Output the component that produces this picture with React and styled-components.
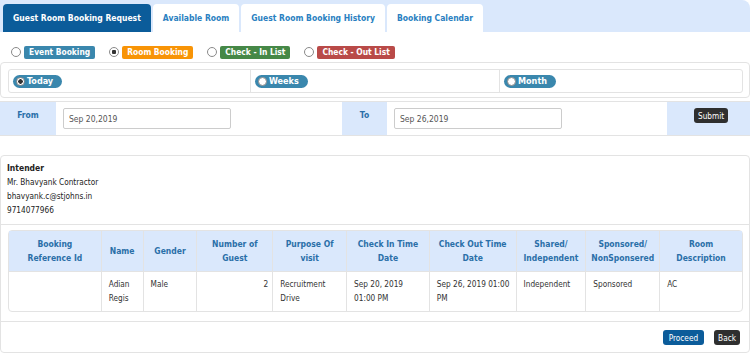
import React from 'react'
import styled, { createGlobalStyle } from 'styled-components'

const GlobalStyle = createGlobalStyle`
    body {
        margin: 0;
        background: #ffffff;
        font-family: "DejaVu Sans Condensed", "Liberation Sans", sans-serif;
        font-size: 8.2px;
        color: #333333;
    }
`

const tabs = ['Guest Room Booking Request', 'Available Room', 'Guest Room Booking History', 'Booking Calendar']

const listTypes = [
    { label: 'Event Booking', color: '#3a87ad' },
    { label: 'Room Booking', color: '#f89406', checked: true },
    { label: 'Check - In List', color: '#468847' },
    { label: 'Check - Out List', color: '#b94a48' },
]

const periods = [
    { label: 'Today', checked: true },
    { label: 'Weeks' },
    { label: 'Month' },
]

// widths are the pixel widths of the reference columns, turned into shares below
const columns = [
    { title: ['Booking', 'Reference Id'], width: 92 },
    { title: ['Name'], width: 42 },
    { title: ['Gender'], width: 54 },
    { title: ['Number of', 'Guest'], width: 76 },
    { title: ['Purpose Of', 'visit'], width: 74 },
    { title: ['Check In Time', 'Date'], width: 83 },
    { title: ['Check Out Time', 'Date'], width: 87 },
    { title: ['Shared/', 'Independent'], width: 70 },
    { title: ['Sponsored/', 'NonSponsered'], width: 74 },
    { title: ['Room', 'Description'], width: 83 },
]
const totalWidth = columns.reduce((s, c) => s + c.width, 0)

const row = [
    '',
    ['Adian', 'Regis'],
    'Male',
    '2',
    ['Recruitment', 'Drive'],
    ['Sep 20, 2019', '01:00 PM'],
    ['Sep 26, 2019 01:00', 'PM'],
    'Independent',
    'Sponsored',
    'AC',
]

const Lines = ({ value }) =>
    Array.isArray(value) ? value.map((l, i) => <div key={i}>{l}</div>) : value

export default function App() {
    return (
        <Page>
            <GlobalStyle />
            <TabBar>
                {tabs.map((t, i) => (
                    <Tab key={t} active={i === 0}>{t}</Tab>
                ))}
            </TabBar>

            <TypeRow>
                {listTypes.map(t => (
                    <TypeOption key={t.label}>
                        <Radio checked={t.checked} />
                        <Badge color={t.color}>{t.label}</Badge>
                    </TypeOption>
                ))}
            </TypeRow>

            <PeriodPanel>
                <PeriodGrid>
                    {periods.map(p => (
                        <PeriodCell key={p.label}>
                            <Pill>
                                <Radio checked={p.checked} small />
                                {p.label}
                            </Pill>
                        </PeriodCell>
                    ))}
                </PeriodGrid>
            </PeriodPanel>

            <DateRow>
                <DateLabel width={56}>From</DateLabel>
                <DateField width={286}><Input defaultValue="Sep 20,2019" /></DateField>
                <DateLabel width={45}>To</DateLabel>
                <DateField width={280}><Input defaultValue="Sep 26,2019" /></DateField>
                <SubmitCell>
                    <DarkButton>Submit</DarkButton>
                </SubmitCell>
            </DateRow>

            <Card>
                <Intender>
                    <strong>Intender</strong>
                    <div>Mr. Bhavyank Contractor</div>
                    <div>bhavyank.c@stjohns.in</div>
                    <div>9714077966</div>
                </Intender>
                <TableWrap>
                    <Table>
                        <colgroup>
                            {columns.map((c, i) => (
                                <col key={i} style={{ width: `${(c.width / totalWidth) * 100}%` }} />
                            ))}
                        </colgroup>
                        <thead>
                            <tr>
                                {columns.map((c, i) => (
                                    <Th key={i}>
                                        <Lines value={c.title} />
                                    </Th>
                                ))}
                            </tr>
                        </thead>
                        <tbody>
                            <tr>
                                {row.map((v, i) => (
                                    <Td key={i} right={i === 3}>
                                        <Lines value={v} />
                                    </Td>
                                ))}
                            </tr>
                        </tbody>
                    </Table>
                </TableWrap>
                <Footer>
                    <BlueButton>Proceed</BlueButton>
                    <DarkButton>Back</DarkButton>
                </Footer>
            </Card>
        </Page>
    )
}

const Page = styled.div`
    width: 750px;
`

const TabBar = styled.div`
    display: flex;
    align-items: flex-end;
    gap: 2px;
    height: 32px;
    padding-left: 3px;
    background: #dae8fc;
    border-top-right-radius: 8px;
`

const Tab = styled.div`
    display: flex;
    align-items: center;
    height: 28px;
    padding: 0 10px;
    border-radius: 4px 4px 0 0;
    font-weight: bold;
    font-size: 8.5px;
    background: ${p => (p.active ? '#0b5c9a' : '#ffffff')};
    color: ${p => (p.active ? '#ffffff' : '#2a7fc1')};
`

const TypeRow = styled.div`
    display: flex;
    align-items: center;
    gap: 14px;
    height: 30px;
    padding: 10px 0 0 11px;
    box-sizing: border-box;
`

const TypeOption = styled.div`
    display: flex;
    align-items: center;
    gap: 3px;
`

const Radio = styled.span`
    box-sizing: border-box;
    width: ${p => (p.small ? 9 : 10)}px;
    height: ${p => (p.small ? 9 : 10)}px;
    border-radius: 50%;
    border: 1px solid #8a8a8a;
    background: ${p =>
        p.checked ? 'radial-gradient(circle, #333 0 2px, #fff 2.5px)' : '#ffffff'};
`

const Badge = styled.span`
    display: inline-flex;
    align-items: center;
    height: 13px;
    padding: 0 5px;
    border-radius: 2px;
    background: ${p => p.color};
    color: #ffffff;
    font-weight: bold;
    font-size: 8.4px;
`

const PeriodPanel = styled.div`
    border: 1px solid #e3e3e3;
    border-radius: 4px;
    padding: 6px 6px 6px 7px;
    height: 36px;
    box-sizing: border-box;
`

const PeriodGrid = styled.div`
    display: grid;
    grid-template-columns: 241px 249px 1fr;
    border: 1px solid #e3e3e3;
    border-radius: 3px;
    height: 22px;
`

const PeriodCell = styled.div`
    display: flex;
    align-items: center;
    padding-left: 4px;
    & + & {
        border-left: 1px solid #e3e3e3;
    }
`

const Pill = styled.span`
    display: inline-flex;
    align-items: center;
    gap: 2px;
    height: 13px;
    padding: 0 9px 0 3px;
    border-radius: 7px;
    background: #3a87ad;
    color: #ffffff;
    font-weight: bold;
    font-size: 9px;
`

const DateRow = styled.div`
    display: flex;
    height: 33px;
    margin-top: 3px;
    border-top: 1px solid #e3e3e3;
    border-bottom: 1px solid #e3e3e3;
`

const DateLabel = styled.div`
    width: ${p => p.width}px;
    background: #dae8fc;
    color: #2a6fa8;
    font-weight: bold;
    font-size: 8.5px;
    text-align: center;
    padding-top: 8px;
    box-sizing: border-box;
`

const DateField = styled.div`
    width: ${p => p.width}px;
    padding: 6px 7px;
    box-sizing: border-box;
`

const Input = styled.input`
    box-sizing: border-box;
    width: 168px;
    height: 21px;
    border: 1px solid #cccccc;
    border-radius: 2px;
    padding: 0 5px;
    font-family: inherit;
    font-size: 8.5px;
    color: #555555;
`

const SubmitCell = styled.div`
    flex: 1;
    background: #dae8fc;
    padding: 6px 0 0 27px;
`

const DarkButton = styled.span`
    display: inline-flex;
    align-items: center;
    height: 15px;
    padding: 0 4px;
    border-radius: 3px;
    background: #2f2f2f;
    color: #ffffff;
    font-size: 8.2px;
`

const BlueButton = styled(DarkButton)`
    background: #0b5c9a;
    padding: 0 6px;
`

const Card = styled.div`
    margin-top: 19px;
    border: 1px solid #e3e3e3;
    border-radius: 4px;
`

const Intender = styled.div`
    display: flex;
    flex-direction: column;
    padding: 5px 6px 7px 6px;
    line-height: 14px;
    border-bottom: 1px solid #e3e3e3;
    color: #222222;
    strong {
        font-size: 8.5px;
    }
`

const TableWrap = styled.div`
    padding: 5px 6px 9px 7px;
    border-bottom: 1px solid #e3e3e3;
`

const Table = styled.table`
    width: 100%;
    border-collapse: separate;
    border-spacing: 0;
    border: 1px solid #e3e3e3;
    border-radius: 4px;
    table-layout: fixed;
`

const Th = styled.th`
    height: 40px;
    background: #dae8fc;
    color: #2a6fa8;
    font-size: 8.5px;
    line-height: 14px;
    text-align: center;
    vertical-align: middle;
    padding: 0;
    & + & {
        border-left: 1px solid #e3e3e3;
    }
`

const Td = styled.td`
    height: 29px;
    vertical-align: top;
    padding: 5px 4px 5px 7px;
    line-height: 14px;
    text-align: ${p => (p.right ? 'right' : 'left')};
    border-top: 1px solid #e3e3e3;
    & + & {
        border-left: 1px solid #e3e3e3;
    }
`

const Footer = styled.div`
    display: flex;
    justify-content: flex-end;
    gap: 10px;
    padding: 8px 9px 7px 0;
`
